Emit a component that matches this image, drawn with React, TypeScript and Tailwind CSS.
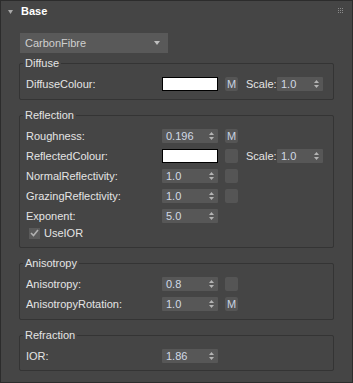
import React from "react";

const font = { fontFamily: '"Liberation Sans", Arial, sans-serif' };

function Arrows() {
  return (
    <svg width="5" height="8" viewBox="0 0 5 8" className="shrink-0">
      <path d="M2.5 0 L5 3 L0 3 Z" fill="#b4b4b4" />
      <path d="M0 5 L5 5 L2.5 8 Z" fill="#b4b4b4" />
    </svg>
  );
}

function Spinner({ v, w = "w-[56px]" }: { v: string; w?: string }) {
  return (
    <div className={`flex h-[14px] ${w} items-center justify-between rounded-[1px] bg-[#575757] pl-[4px] pr-[4px]`}>
      <span className="text-[11px] leading-[14px] text-[#d2dae6]">{v}</span>
      <Arrows />
    </div>
  );
}

function MBtn({ m = true }: { m?: boolean }) {
  return (
    <div className="ml-[7px] flex h-[14px] w-[13px] items-center justify-center rounded-[2px] bg-[#555555] text-[11px] leading-[14px] text-[#c8d2e0]">
      {m ? "M" : ""}
    </div>
  );
}

function Swatch() {
  return <div className="h-[14px] w-[56px] border border-black bg-white" />;
}

function ScaleCtl() {
  return (
    <div className="ml-[8px] flex items-center">
      <span className="w-[31px] text-[11px] text-[#e4e4e4]">Scale:</span>
      <Spinner v="1.0" w="w-[46px]" />
    </div>
  );
}

function Row({ label, children }: { label: string; children?: React.ReactNode }) {
  return (
    <div className="flex h-[20px] items-center">
      <span className="w-[136px] text-[11px] text-[#e4e4e4]">{label}</span>
      {children}
    </div>
  );
}

function Group({ title, children, pb, mt }: { title: string; children: React.ReactNode; pb: string; mt: string }) {
  return (
    <fieldset className={`ml-[18px] w-[315px] rounded-[2px] border border-[#343434] pl-[6px] pt-[4px] ${pb} ${mt}`}>
      <legend className="-ml-[3px] px-[2px] text-[11px] leading-[14px] text-[#e4e4e4]">{title}</legend>
      {children}
    </fieldset>
  );
}

export default function App() {
  return (
    <div className="relative h-[383px] w-[353px] border border-[#2c2c2c] bg-[#454545]" style={font}>
      <div className="flex h-[21px] items-center">
        <svg width="5" height="4" viewBox="0 0 5 4" className="ml-[7px]">
          <path d="M0 0 L5 0 L2.5 4 Z" fill="#a8a8a8" />
        </svg>
        <span className="ml-[8px] text-[11px] font-bold text-white">Base</span>
      </div>
      <div className="absolute right-[9px] top-[7px] grid grid-cols-3 gap-[1px]">
        {Array.from({ length: 9 }).map((_, i) => (
          <div key={i} className="h-[1px] w-[1px] bg-[#8a8a8a]" />
        ))}
      </div>
      <div className="pt-[11px]">
        <div className="ml-[19px] flex h-[20px] w-[148px] items-center justify-between bg-[#595959] pl-[5px] pr-[8px]">
          <span className="text-[11px] text-[#cfcfcf]">CarbonFibre</span>
          <svg width="6" height="4" viewBox="0 0 6 4">
            <path d="M0 0 L6 0 L3 4 Z" fill="#c0c0c0" />
          </svg>
        </div>
        <Group title="Diffuse" pb="pb-[5px]" mt="mt-[3px]">
          <Row label="DiffuseColour:">
            <Swatch />
            <MBtn />
            <ScaleCtl />
          </Row>
        </Group>
        <Group title="Reflection" pb="pb-[7px]" mt="mt-[8px]">
          <Row label="Roughness:">
            <Spinner v="0.196" />
            <MBtn />
          </Row>
          <Row label="ReflectedColour:">
            <Swatch />
            <MBtn m={false} />
            <ScaleCtl />
          </Row>
          <Row label="NormalReflectivity:">
            <Spinner v="1.0" />
            <MBtn m={false} />
          </Row>
          <Row label="GrazingReflectivity:">
            <Spinner v="1.0" />
            <MBtn m={false} />
          </Row>
          <Row label="Exponent:">
            <Spinner v="5.0" />
          </Row>
          <div className="flex h-[14px] items-center pl-[3px]">
            <div className="flex h-[11px] w-[11px] items-center justify-center bg-[#5a5a5a]">
              <svg width="9" height="8" viewBox="0 0 9 8">
                <path d="M1 4 L3.5 6.5 L8 1" stroke="#b0b0b0" strokeWidth="1.6" fill="none" />
              </svg>
            </div>
            <span className="ml-[4px] text-[11px] text-[#e4e4e4]">UseIOR</span>
          </div>
        </Group>
        <Group title="Anisotropy" pb="pb-[5px]" mt="mt-[8px]">
          <Row label="Anisotropy:">
            <Spinner v="0.8" />
            <MBtn m={false} />
          </Row>
          <Row label="AnisotropyRotation:">
            <Spinner v="1.0" />
            <MBtn />
          </Row>
        </Group>
        <Group title="Refraction" pb="pb-[4px]" mt="mt-[8px]">
          <Row label="IOR:">
            <Spinner v="1.86" />
          </Row>
        </Group>
      </div>
    </div>
  );
}
